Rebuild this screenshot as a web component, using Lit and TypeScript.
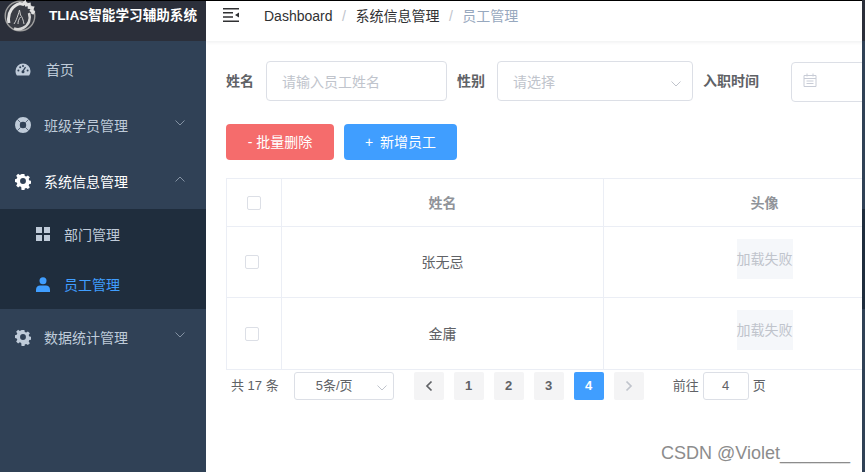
import { LitElement, html, css, svg } from "lit";
import { customElement } from "lit/decorators.js";

const chevron = (up = false) => html`<svg class="chev" viewBox="0 0 12 8" width="12" height="8"><path d=${up ? "M1.5 6.5 6 2l4.5 4.5" : "M1.5 1.5 6 6l4.5-4.5"} fill="none" stroke="currentColor" stroke-width="1"/></svg>`;

const gear = html`<svg viewBox="0 0 18 18" width="18" height="18"><path fill="currentColor" fill-rule="evenodd" d="M7.400 0.600h3.200l.4 2.200 1.600.7 1.900-1.300 2.200 2.200-1.300 1.900.7 1.600 2.200.4v3.200l-2.200.4-.7 1.600 1.300 1.900-2.200 2.200-1.900-1.300-1.600.7-.4 2.200H7.400L7 15.200l-1.600-.7-1.900 1.300-2.200-2.200 1.300-1.900-.7-1.600L-.3 9.700V6.500L1.900 6.100l.7-1.600L1.300 2.600 3.500.4l1.900 1.300L7 1z M9 5.200a3.300 3.300 0 1 0 0 6.600a3.300 3.300 0 0 0 0-6.600z" transform="translate(0 .5)"/></svg>`;

const ring = html`<svg viewBox="0 0 16 16" width="16" height="16"><path fill="currentColor" fill-rule="evenodd" d="M8 0a8 8 0 1 0 0 16A8 8 0 0 0 8 0zm0 4.800a3.200 3.200 0 1 1 0 6.400a3.200 3.200 0 0 1 0-6.400z"/><path d="M2.300 2.300 5.700 5.700M13.700 2.300 10.300 5.700M2.300 13.700 5.700 10.300M13.700 13.700 10.300 10.300" stroke="#304156" stroke-width=".7"/></svg>`;

const dash = html`<svg viewBox="0 0 16 13" width="16" height="13"><path fill="currentColor" d="M8 0.500A7.500 7.500 0 0 0 .5 8c0 1.700.5 3.200 1.400 4.500h12.200c.9-1.300 1.400-2.800 1.400-4.500A7.500 7.500 0 0 0 8 .5z"/><path d="M8 8 10.500 4.200" stroke="#304156" stroke-width="1.300"/><circle cx="8" cy="8.800" r="1.500" fill="#304156"/><circle cx="3.400" cy="7.600" r="1" fill="#304156"/><circle cx="5.200" cy="4.200" r="1" fill="#304156"/><circle cx="8" cy="3" r="1" fill="#304156"/><circle cx="12.600" cy="7.600" r="1" fill="#304156"/></svg>`;

const grid = html`<svg viewBox="0 0 14 14" width="14" height="14"><path fill="currentColor" d="M0 0h6v6H0zM8 0h6v6H8zM0 8h6v6H0zM8 8h6v6H8z"/></svg>`;
const user = html`<svg viewBox="0 0 14 15" width="14" height="15"><circle cx="7" cy="3.800" r="3.500" fill="currentColor"/><path fill="currentColor" d="M0 15v-2.500C0 10 2 8.500 4 8.500h6c2 0 4 1.500 4 4V15z"/></svg>`;

const logo = svg`<svg class="logo" viewBox="0 0 32 32" width="32" height="32">
  <circle cx="16" cy="16" r="14.800" fill="#3a3d45" stroke="#9d9d9d" stroke-width="1.400"/>
  <path d="M5 23C2.500 12 10 5 16 3.500l3 .8 2-2 1.200 2.700 3-.6v3l3.300.3-1.200 2.800 2 1.500-1.300 2" fill="none" stroke="#e2e2e2" stroke-width="3"/>
  <path d="M25 13c2 6 0 12-6 15-3 1.500-6 1.500-9 .5" fill="none" stroke="#d5d5d5" stroke-width="2.600"/>
  <path d="M10 24c2-3 3-6 4-9 .5-1.500 1-3 1.500-5l1 5c1.800 2 2.700 5 3.500 9M14 24c0-2.500.8-5 2.500-7" fill="none" stroke="#cfcfcf" stroke-width="1"/>
</svg>`;

@customElement("app-root")
export class AppRoot extends LitElement {
  static styles = css`
    :host { display: block; width: 865px; height: 472px; overflow: hidden; font-family: "Liberation Sans", "Noto Sans CJK SC", sans-serif; font-size: 14px; background: #fff; position: relative; }
    * { box-sizing: border-box; }
    .layout { display: flex; height: 472px; border-top: 1px solid #000; }
    .side { width: 206px; flex: none; background: #304156; color: #bfcbd9; }
    .brand { height: 40px; background: #2b2f3a; display: flex; align-items: flex-start; padding-left: 4px; color: #fff; font-weight: 700; font-size: 13.6px; gap: 13px; white-space: nowrap; }
    .brand .logo { flex: none; margin-top: -1px; }
    .brand span { line-height: 30px; }
    .item { height: 56px; display: flex; align-items: center; position: relative; }
    .item .ic { width: 16px; margin-left: 15px; display: flex; align-items: center; justify-content: center; flex: none; }
    .item .lbl { margin-left: 13px; }
    .item.home .lbl { margin-left: 15px; }
    .item .chev { position: absolute; left: 174px; top: 22px; color: #8492a3; }
    .item.open { color: #fff; }
    .sub { background: #1f2d3d; }
    .subitem { height: 50px; display: flex; align-items: center; padding-left: 36px; gap: 14px; }
    .subitem.on { color: #409eff; }
    .subitem svg { flex: none; }
    .main { flex: 1; min-width: 0; display: flex; flex-direction: column; overflow: hidden; }
    .nav { height: 40px; flex: none; display: flex; align-items: flex-start; box-shadow: 0 1px 4px rgba(0,21,41,.08); padding-left: 17px; color: #303133; position: relative; }
    .nav .tog { margin: 7px 25px 0 0; display: block; flex: none; }
    .crumb { display: flex; align-items: center; line-height: 30px; }
    .crumb .sep { color: #c0c4cc; margin: 0 9.5px; }
    .crumb .last { color: #97a8be; }
    .form { display: flex; align-items: center; margin: 20px 0 0 20px; height: 40px; white-space: nowrap; }
    .form label { font-weight: 700; color: #606266; margin-bottom: 2px; }
    .inp { height: 40px; border: 1px solid #dcdfe6; border-radius: 4px; display: flex; align-items: center; color: #c0c4cc; padding-left: 15px; position: relative; flex: none; }
    .name { width: 181px; margin: 0 10px 0 12px; }
    .sel { width: 196px; margin: 0 10px 0 12px; }
    .sel .chev { position: absolute; right: 10px; top: 18px; color: #c0c4cc; }
    .date { width: 200px; margin-left: 32px; margin-top: 1px; padding-left: 11px; }
    .date svg { margin-top: -3px; }
    .btns { display: flex; gap: 10px; margin: 23px 0 0 20px; }
    .btn { height: 36px; border-radius: 4px; color: #fff; display: flex; align-items: center; justify-content: center; padding-bottom: 2px; }
    .danger { width: 108px; background: #f56c6c; }
    .primary { width: 113px; background: #409eff; word-spacing: 3px; }
    .table { margin: 18px 0 0 20px; width: 760px; border: 1px solid #ebeef5; border-right: 0; flex: none; }
    .row { display: grid; grid-template-columns: 54px 322px 322px; border-top: 1px solid #ebeef5; height: 71px; color: #606266; text-align: center; align-items: stretch; }
    .row.r2 { height: 72px; }
    .row.head { border-top: 0; height: 47px; color: #909399; font-weight: 700; }
    .row > div { display: flex; align-items: center; justify-content: center; border-left: 1px solid #ebeef5; padding-bottom: 2px; }
    .row > div:first-child { border-left: 0; padding-bottom: 0; }
    .row .av { width: 56px; height: 40px; background: #f5f7fa; color: #c0c4cc; flex: none; display: flex; align-items: center; justify-content: center; white-space: nowrap; margin-bottom: 5px; padding-bottom: 2px; }
    .cb { width: 14px; height: 14px; border: 1px solid #dcdfe6; border-radius: 2px; background: #fff; display: block; }
    .row .cb { margin-right: 4px; }
    .row.head .cb { margin-right: 0; }
    .pager { display: flex; align-items: center; margin: 2px 0 0 25px; height: 28px; font-size: 13px; color: #606266; white-space: nowrap; flex: none; }
    .pager > span { margin-bottom: 3px; }
    .pg { width: 30px; height: 28px; background: #f4f4f5; border-radius: 2px; display: flex; align-items: center; justify-content: center; margin-right: 10px; font-weight: 700; color: #606266; flex: none; padding-bottom: 2px; }
    .pg svg { margin-top: 2px; margin-bottom: 1px; }
    .pg.on { background: #409eff; color: #fff; }
    .pg.dis { color: #c0c4cc; }
    .psel { width: 100px; height: 28px; border: 1px solid #dcdfe6; border-radius: 3px; margin: 0 20px 0 15px; display: flex; align-items: center; padding: 0 0 3px 21px; position: relative; flex: none; }
    .psel .chev { position: absolute; right: 5px; top: 11px; color: #c0c4cc; }
    .jump { width: 46px; height: 28px; border: 1px solid #dcdfe6; border-radius: 3px; margin: 0 4px; display: flex; align-items: center; justify-content: center; flex: none; padding-bottom: 2px; }
    .goto { margin-left: 19px; }
    .right { position: absolute; top: 0; right: 0; width: 3px; height: 472px; background: #304156; display: flex; flex-direction: column; }
    .right .b { height: 41px; background: #2b2f3a; }
    .right .m { height: 168px; }
    .right .s { height: 100px; background: #1f2d3d; }
    .wm { position: absolute; right: 15px; bottom: 10px; font-size: 18px; line-height: 1; color: #8c8c8c; }
  `;

  render() {
    return html`
      <div class="layout">
        <aside class="side">
          <div class="brand">${logo}<span>TLIAS智能学习辅助系统</span></div>
          <div class="item home"><span class="ic">${dash}</span><span class="lbl">首页</span></div>
          <div class="item"><span class="ic">${ring}</span><span class="lbl">班级学员管理</span>${chevron()}</div>
          <div class="item open"><span class="ic">${gear}</span><span class="lbl">系统信息管理</span>${chevron(true)}</div>
          <div class="sub">
            <div class="subitem">${grid}<span>部门管理</span></div>
            <div class="subitem on">${user}<span>员工管理</span></div>
          </div>
          <div class="item"><span class="ic">${gear}</span><span class="lbl">数据统计管理</span>${chevron()}</div>
        </aside>
        <main class="main">
          <div class="nav">
            <svg class="tog" viewBox="0 0 16 14" width="16" height="14"><path fill="#303133" d="M0 0h16v1.500H0zM0 12.500h16V14H0zM0 4h10v1.500H0zM0 8.300h10v1.500H0zM16 4.400v5l-4-2.500z"/></svg>
            <div class="crumb"><span>Dashboard</span><span class="sep">/</span><span>系统信息管理</span><span class="sep">/</span><span class="last">员工管理</span></div>
          </div>
          <div class="form">
            <label>姓名</label>
            <div class="inp name">请输入员工姓名</div>
            <label>性别</label>
            <div class="inp sel">请选择${chevron()}</div>
            <label>入职时间</label>
            <div class="inp date"><svg viewBox="0 0 14 14" width="14" height="14"><path fill="none" stroke="#c8ccd6" d="M1 2.500h12v11H1zM1 5.500h12M4 .5v3M10 .5v3M3.500 8h7M3.500 10.500h7"/></svg></div>
          </div>
          <div class="btns">
            <div class="btn danger">- 批量删除</div>
            <div class="btn primary">+ 新增员工</div>
          </div>
          <div class="table">
            <div class="row head"><div><span class="cb"></span></div><div>姓名</div><div>头像</div></div>
            <div class="row"><div><span class="cb"></span></div><div>张无忌</div><div><span class="av">加载失败</span></div></div>
            <div class="row r2"><div><span class="cb"></span></div><div>金庸</div><div><span class="av">加载失败</span></div></div>
          </div>
          <div class="pager">
            <span>共 17 条</span>
            <div class="psel">5条/页${chevron()}</div>
            <div class="pg"><svg viewBox="0 0 8 12" width="8" height="12"><path d="M6.500 1.500 2 6l4.500 4.500" fill="none" stroke="currentColor" stroke-width="1.700"/></svg></div>
            <div class="pg">1</div><div class="pg">2</div><div class="pg">3</div><div class="pg on">4</div>
            <div class="pg dis"><svg viewBox="0 0 8 12" width="8" height="12"><path d="M1.500 1.500 6 6l-4.500 4.500" fill="none" stroke="currentColor" stroke-width="1.700"/></svg></div>
            <span class="goto">前往</span><div class="jump">4</div><span>页</span>
          </div>
        </main>
      </div>
      <div class="right"><div class="b"></div><div class="m"></div><div class="s"></div></div>
      <div class="wm">CSDN @Violet_______</div>
    `;
  }
}
